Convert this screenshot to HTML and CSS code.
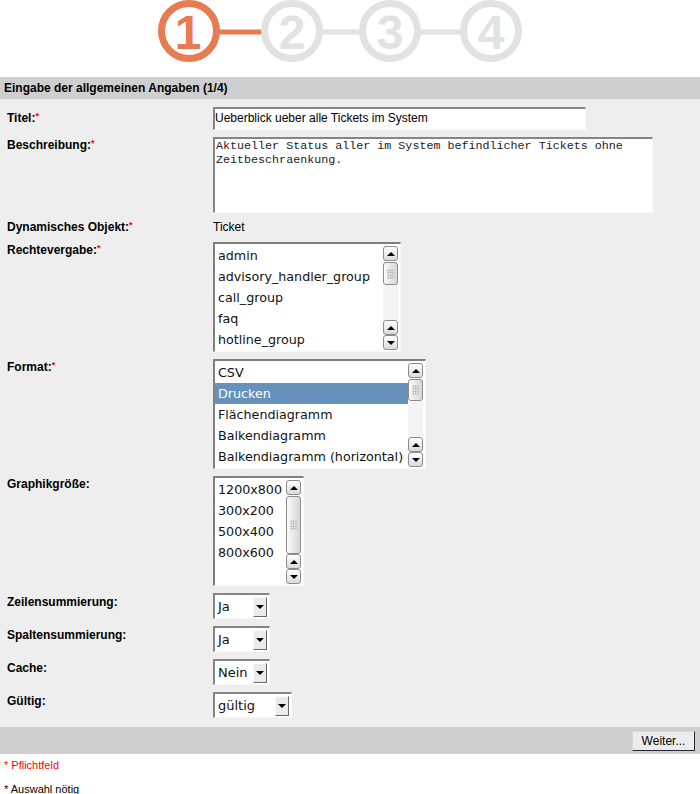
FILE: index.html
```html
<!DOCTYPE html>
<html lang="de">
<head>
<meta charset="utf-8">
<title>Eingabe der allgemeinen Angaben</title>
<link rel="stylesheet" href="styles.css">
</head>
<body>
<div class="steps">
  <svg class="steps-svg" width="384" height="77" viewBox="0 0 384 77">
    <line x1="60" y1="32" x2="106" y2="32" class="ln-on"/>
    <line x1="163" y1="32" x2="204" y2="32" class="ln-off"/>
    <line x1="261" y1="32" x2="305" y2="32" class="ln-off"/>
    <circle cx="31" cy="31" r="27.5" class="c-on"/>
    <circle cx="134" cy="31" r="27.5" class="c-off"/>
    <circle cx="232" cy="31" r="27.5" class="c-off"/>
    <circle cx="333" cy="31" r="27.5" class="c-off"/>
    <text x="30" y="49" class="d-on">1</text>
    <text x="134" y="49" class="d-off">2</text>
    <text x="232" y="49" class="d-off">3</text>
    <text x="333" y="49" class="d-off">4</text>
  </svg>
</div>

<div class="bar head">Eingabe der allgemeinen Angaben (1/4)</div>

<div class="form">
  <div class="row">
    <div class="label lbl-title">Titel:<span class="req">*</span></div>
    <div class="input">Ueberblick ueber alle Tickets im System</div>
  </div>
  <div class="row">
    <div class="label">Beschreibung:<span class="req">*</span></div>
    <div class="textarea">Aktueller Status aller im System befindlicher Tickets ohne<br>Zeitbeschraenkung.</div>
  </div>
  <div class="row row-text">
    <div class="label">Dynamisches Objekt:<span class="req">*</span></div>
    <div class="value">Ticket</div>
  </div>
  <div class="row">
    <div class="label">Rechtevergabe:<span class="req">*</span></div>
    <div class="listbox lb-rights">
      <div class="items">
        <div class="item">admin</div>
        <div class="item">advisory_handler_group</div>
        <div class="item">call_group</div>
        <div class="item">faq</div>
        <div class="item">hotline_group</div>
      </div>
      <div class="scroll">
        <div class="sbtn"><span class="up"></span></div>
        <div class="thumb th-rights"><span class="grip"></span></div>
        <div class="track"></div>
        <div class="sbtn"><span class="up"></span></div>
        <div class="sbtn"><span class="down"></span></div>
      </div>
    </div>
  </div>
  <div class="row">
    <div class="label">Format:<span class="req">*</span></div>
    <div class="listbox lb-format">
      <div class="items">
        <div class="item">CSV</div>
        <div class="item selected">Drucken</div>
        <div class="item">Flächendiagramm</div>
        <div class="item">Balkendiagramm</div>
        <div class="item">Balkendiagramm (horizontal)</div>
      </div>
      <div class="scroll">
        <div class="sbtn"><span class="up"></span></div>
        <div class="thumb th-format"><span class="grip"></span></div>
        <div class="track"></div>
        <div class="sbtn"><span class="up"></span></div>
        <div class="sbtn"><span class="down"></span></div>
      </div>
    </div>
  </div>
  <div class="row">
    <div class="label">Graphikgröße:</div>
    <div class="listbox lb-size">
      <div class="items">
        <div class="item">1200x800</div>
        <div class="item">300x200</div>
        <div class="item">500x400</div>
        <div class="item">800x600</div>
      </div>
      <div class="scroll">
        <div class="sbtn"><span class="up"></span></div>
        <div class="thumb th-size"><span class="grip"></span></div>
        <div class="sbtn"><span class="up"></span></div>
        <div class="sbtn"><span class="down"></span></div>
      </div>
    </div>
  </div>
  <div class="row">
    <div class="label lbl-sel">Zeilensummierung:</div>
    <div class="select sel-s"><span class="sel-text">Ja</span><span class="sel-btn"><span class="down"></span></span></div>
  </div>
  <div class="row">
    <div class="label lbl-sel">Spaltensummierung:</div>
    <div class="select sel-s"><span class="sel-text">Ja</span><span class="sel-btn"><span class="down"></span></span></div>
  </div>
  <div class="row">
    <div class="label lbl-sel">Cache:</div>
    <div class="select sel-s"><span class="sel-text">Nein</span><span class="sel-btn"><span class="down"></span></span></div>
  </div>
  <div class="row">
    <div class="label lbl-sel">Gültig:</div>
    <div class="select sel-l"><span class="sel-text">gültig</span><span class="sel-btn"><span class="down"></span></span></div>
  </div>
</div>

<div class="bar foot"><button class="btn" type="button">Weiter...</button></div>

<div class="notes">
  <div class="note note-red">* Pflichtfeld</div>
  <div class="note">* Auswahl nötig</div>
</div>
</body>
</html>
```

FILE: styles.css
```css
html, body {
  margin: 0;
  padding: 0;
  background: #ffffff;
  font-family: "Liberation Sans", Arial, sans-serif;
  font-size: 12px;
  color: #000;
}

.steps {
  height: 77px;
  display: flex;
  justify-content: center;
  overflow: hidden;
}
.steps-svg { display: block; }
.ln-on { stroke: #e77b52; stroke-width: 5; }
.ln-off { stroke: #e2e2e2; stroke-width: 5; }
.c-on { fill: none; stroke: #e77b52; stroke-width: 7; }
.c-off { fill: none; stroke: #e2e2e2; stroke-width: 7; }
.d-on, .d-off {
  font-family: "Liberation Sans", Arial, sans-serif;
  font-weight: bold;
  font-size: 48px;
  text-anchor: middle;
}
.d-on { fill: #e77b52; }
.d-off { fill: #e2e2e2; }

.bar {
  background: #cfcfcf;
}
.head {
  height: 22px;
  line-height: 22px;
  padding-left: 4px;
  font-weight: bold;
  font-size: 12px;
}

.form {
  background: #eeeeee;
  padding: 8px 0 9px 7px;
  display: flex;
  flex-direction: column;
  gap: 7px;
}
.row {
  display: flex;
  align-items: flex-start;
}
.label {
  width: 206px;
  flex: none;
  font-weight: bold;
  font-size: 12px;
  line-height: 14px;
  padding-top: 1px;
}
.lbl-title { padding-top: 4px; }
.lbl-sel { padding-top: 2px; }
.req {
  color: #ff0000;
  font-size: 9px;
  vertical-align: top;
  line-height: 10px;
}
.row-text .label { padding-top: 0; line-height: 15px; }
.value { font-size: 12px; line-height: 15px; }

.input {
  box-sizing: border-box;
  width: 373px;
  height: 23px;
  background: #fff;
  border-top: 2px solid #858585;
  border-left: 2px solid #858585;
  border-right: 1px solid #f8f8f8;
  border-bottom: 1px solid #f8f8f8;
  font-size: 12px;
  line-height: 19px;
  padding-left: 0;
  white-space: nowrap;
}

.textarea {
  box-sizing: border-box;
  width: 440px;
  height: 76px;
  background: #fff;
  border-top: 2px solid #858585;
  border-left: 2px solid #858585;
  border-right: 1px solid #f8f8f8;
  border-bottom: 1px solid #f8f8f8;
  font-family: "Liberation Mono", "Courier New", monospace;
  font-size: 11.7px;
  line-height: 14px;
  padding: 0 1px;
  color: #222;
}

.listbox {
  box-sizing: border-box;
  height: 110px;
  background: #fff;
  border-top: 2px solid #7f7f7f;
  border-left: 2px solid #7f7f7f;
  border-right: 1px solid #f8f8f8;
  border-bottom: 1px solid #f8f8f8;
  display: flex;
}
.lb-rights { width: 188px; }
.lb-format { width: 213px; }
.lb-size { width: 91px; }
.items {
  flex: 1;
  padding-top: 1px;
  overflow: hidden;
}
.item {
  height: 21px;
  line-height: 21px;
  padding-left: 3px;
  font-family: "DejaVu Sans", sans-serif;
  font-size: 12.7px;
  color: #111;
  white-space: nowrap;
}
.item.selected {
  background: #6591ba;
  color: #fff;
}

.scroll {
  width: 15px;
  margin: 2px 2px 1px 0;
  display: flex;
  flex-direction: column;
}
.sbtn {
  box-sizing: border-box;
  height: 15px;
  flex: none;
  border: 1px solid #8c8c8c;
  border-radius: 3px;
  background: linear-gradient(#ffffff, #dadada);
  display: flex;
  align-items: center;
  justify-content: center;
}
.up {
  width: 0;
  height: 0;
  border-left: 4px solid transparent;
  border-right: 4px solid transparent;
  border-bottom: 4px solid #000;
}
.down {
  width: 0;
  height: 0;
  border-left: 4px solid transparent;
  border-right: 4px solid transparent;
  border-top: 4px solid #000;
}
.thumb {
  box-sizing: border-box;
  flex: none;
  margin-top: 1px;
  border: 1px solid #8c8c8c;
  border-radius: 3px;
  background: linear-gradient(to right, #fafafa, #d6d6d6);
  display: flex;
  align-items: center;
  justify-content: center;
}
.th-rights { height: 23px; }
.th-format { height: 22px; }
.th-size { height: 58px; }
.grip {
  width: 7px;
  height: 10px;
  background-image: radial-gradient(circle, #bcbcbc 0.8px, transparent 1px);
  background-size: 2.4px 2.5px;
}
.track {
  flex: 1;
  background-color: #fbfbfb;
  background-image: repeating-conic-gradient(#ececec 0 25%, #fbfbfb 0 50%);
  background-size: 2px 2px;
}

.select {
  box-sizing: border-box;
  height: 26px;
  background: #fff;
  border-top: 2px solid #858585;
  border-left: 2px solid #858585;
  border-right: 1px solid #f8f8f8;
  border-bottom: 1px solid #f8f8f8;
  display: flex;
  align-items: center;
  justify-content: space-between;
}
.sel-s { width: 57px; }
.sel-l { width: 79px; }
.sel-text {
  padding-left: 3px;
  font-family: "DejaVu Sans", sans-serif;
  font-size: 13px;
  color: #111;
}
.sel-btn {
  box-sizing: border-box;
  width: 14px;
  height: 20px;
  margin-right: 2px;
  margin-top: 1px;
  background: #ebebeb;
  border-top: 1px solid #fafafa;
  border-left: 1px solid #fafafa;
  border-right: 1px solid #6a6a6a;
  border-bottom: 1px solid #6a6a6a;
  display: flex;
  align-items: center;
  justify-content: center;
}

.foot {
  height: 27px;
  display: flex;
  justify-content: flex-end;
  align-items: flex-start;
  padding-right: 5px;
}
.btn {
  box-sizing: border-box;
  width: 63px;
  height: 20px;
  margin-top: 4px;
  padding: 0;
  background: #ececec;
  border-top: 1px solid #d8d8d8;
  border-left: 1px solid #d8d8d8;
  border-right: 1px solid #26263a;
  border-bottom: 1px solid #26263a;
  border-radius: 0;
  font-family: "Liberation Sans", Arial, sans-serif;
  font-size: 12px;
  color: #000;
}

.notes {
  padding: 6px 0 0 4px;
}
.note {
  font-size: 11px;
  line-height: 11px;
  margin-bottom: 13px;
}
.note:last-child { margin-bottom: 0; }
.note-red { color: #ff0000; }
```
